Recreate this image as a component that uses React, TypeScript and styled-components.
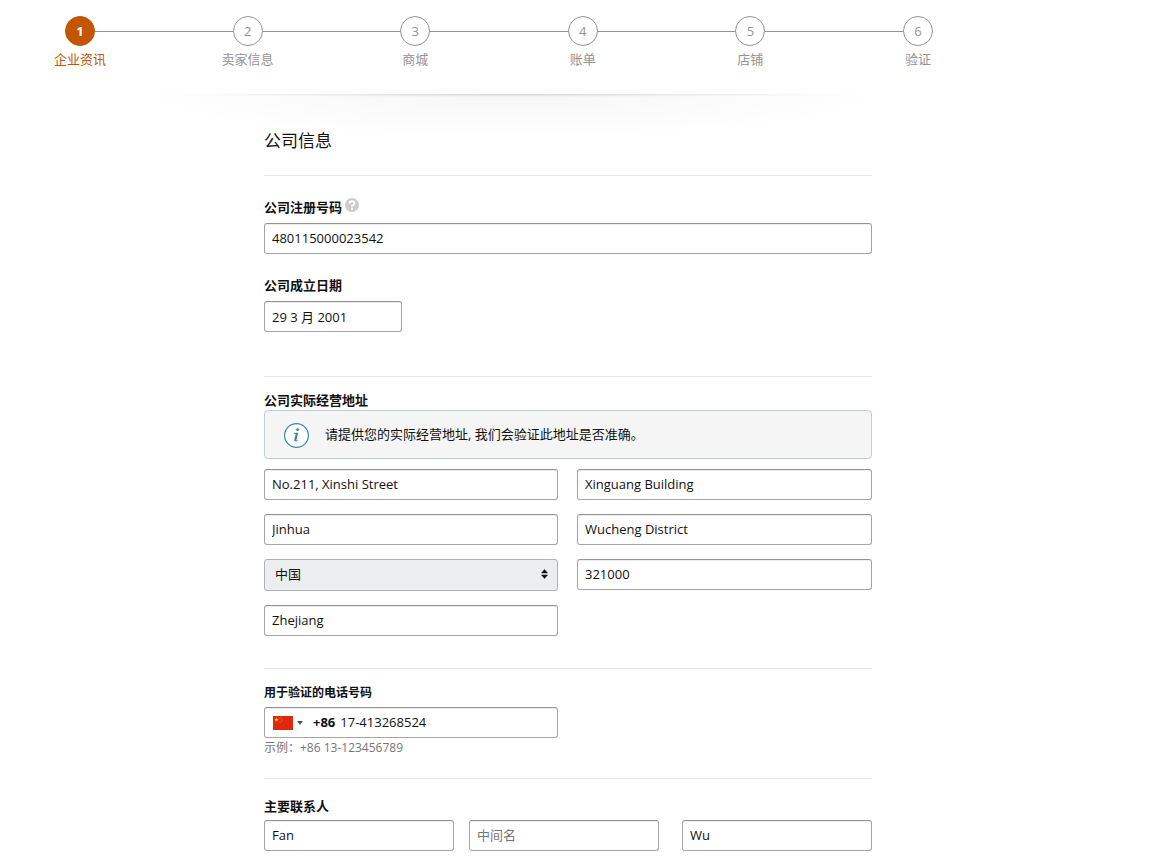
import React from "react";
import styled, { createGlobalStyle, css } from "styled-components";

const GlobalStyle = createGlobalStyle`
  *, *::before, *::after { box-sizing: border-box; }
  body {
    margin: 0;
    background: #fff;
    color: #111;
    font-family: "Open Sans", "Noto Sans CJK SC", sans-serif;
    font-size: 13px;
    line-height: 19px;
  }
  input, select, button { font: inherit; color: inherit; }
`;

const Page = styled.main`
  padding-bottom: 15px;
`;

const Stepper = styled.ol`
  display: flex;
  list-style: none;
  max-width: 933px;
  margin: 0;
  padding: 16px 0 0 65px;
`;

const Step = styled.li<{ $active?: boolean }>`
  display: flex;
  flex: ${(p) => (p.$active ? "none" : "1")};
  color: ${(p) => (p.$active ? "#c45500" : "#949494")};
`;

const Connector = styled.span`
  flex: 1;
  height: 1px;
  margin-top: 15px;
  background: #949494;
`;

const StepBody = styled.div`
  display: flex;
  flex-direction: column;
  align-items: center;
  width: 30px;
  white-space: nowrap;
`;

const StepCircle = styled.span<{ $active?: boolean }>`
  display: flex;
  align-items: center;
  justify-content: center;
  width: 30px;
  height: 30px;
  margin-bottom: 4px;
  border: 1px solid #949494;
  border-radius: 50%;
  ${(p) =>
    p.$active &&
    css`
      border-color: #c45500;
      background: #c45500;
      color: #fff;
      font-weight: 700;
    `}
`;

const Shade = styled.div`
  max-width: 1022px;
  height: 44px;
  margin-top: 25px;
  background:
    radial-gradient(ellipse 360px 3px at 50% 0, rgba(0, 0, 0, 0.13), transparent),
    radial-gradient(ellipse 380px 44px at 50% 0, rgba(0, 0, 0, 0.035), transparent);
`;

const Form = styled.form`
  max-width: 872px;
  margin-top: -9px;
  padding-left: 264px;

  @media (max-width: 800px) {
    padding: 0 16px;
  }
`;

const Title = styled.h1`
  margin: 0;
  padding-bottom: 22px;
  font-size: 17px;
  font-weight: 400;
  line-height: 24px;
`;

const Section = styled.section<{ $top: number; $bottom: number }>`
  padding: ${(p) => p.$top}px 0 ${(p) => p.$bottom}px;
  border-top: 1px solid #e7e7e7;
`;

const Label = styled.label<{ $small?: boolean }>`
  font-size: ${(p) => (p.$small ? 12 : 13)}px;
  font-weight: 700;
`;

const LabelRow = styled.div<{ $gap?: number }>`
  display: flex;
  gap: 3px;
  height: 19px;
  margin-bottom: ${(p) => p.$gap ?? 0}px;
`;

const HelpButton = styled.button`
  display: block;
  width: 14px;
  height: 14px;
  padding: 0;
  border: 0;
  background: none;
  cursor: pointer;
`;

const fieldFrame = css`
  width: 100%;
  height: 31px;
  border: 1px solid #a6a6a6;
  border-top-color: #949494;
  border-radius: 3px;
  background: #fff;
  box-shadow: inset 0 1px 0 rgba(0, 0, 0, 0.07);
`;

const TextInput = styled.input`
  ${fieldFrame}
  display: block;
  padding: 0 7px 2px;
  outline: none;
  &::placeholder { color: #767676; opacity: 1; }
`;

const DateInput = styled(TextInput)`
  width: 138px;
  padding-bottom: 0;
`;

const Field = styled.div`
  & + & { margin-top: 22px; }
`;

const Alert = styled.div`
  display: flex;
  align-items: center;
  gap: 16px;
  height: 49px;
  margin-bottom: 10px;
  padding: 2px 0 0 19px;
  border: 1px solid #b9d0d9;
  border-radius: 4px;
  background: #f5f5f5;
`;

const AlertText = styled.p`
  margin: 0;
  padding-bottom: 3px;
`;

const AddressGrid = styled.div`
  display: grid;
  grid-template-columns: 294fr 295fr;
  gap: 14px 19px;
`;

const SelectBox = styled.div`
  position: relative;
  svg {
    position: absolute;
    right: 10px;
    top: 10px;
    pointer-events: none;
  }
`;

const Select = styled.select`
  display: block;
  width: 100%;
  height: 32px;
  padding: 0 10px 2px;
  appearance: none;
  border: 1px solid #adb1b8;
  border-radius: 3px;
  background: #ecedee;
  outline: none;
`;

const PhoneBox = styled.div`
  ${fieldFrame}
  display: flex;
  align-items: center;
  padding-left: 8px;
`;

const CountryButton = styled.button`
  display: flex;
  align-items: center;
  gap: 4px;
  padding: 0;
  border: 0;
  background: none;
  cursor: pointer;
`;

const DialCode = styled.span`
  margin: 0 5px 0 10px;
  font-weight: 700;
`;

const PhoneInput = styled.input`
  flex: 1;
  min-width: 0;
  padding: 0;
  border: 0;
  background: none;
  outline: none;
`;

const Hint = styled.p`
  margin: 0;
  color: #767676;
  font-size: 12px;
`;

const NameGrid = styled.div`
  display: grid;
  grid-template-columns: 395fr 190fr;
  gap: 23px;
`;

const GivenNames = styled.div`
  display: grid;
  grid-template-columns: 1fr 1fr;
  gap: 15px;
`;

const HelpIcon = () => (
  <svg width="14" height="14" viewBox="0 0 14 14" aria-hidden="true">
    <circle cx="7" cy="7" r="7" fill="#ccc" />
    <path d="M4.5 5.4C4.5 2.5 9.5 2.5 9.5 5.2C9.5 6.9 7 6.8 7 8.6" fill="none" stroke="#fff" strokeWidth="1.9" />
    <rect x="6" y="9.6" width="2" height="2" fill="#fff" />
  </svg>
);

const InfoIcon = () => (
  <svg width="25" height="25" viewBox="0 0 25 25" aria-hidden="true">
    <circle cx="12.5" cy="12.5" r="11.9" fill="#fff" stroke="#3188aa" strokeWidth="1.2" />
    <circle cx="13.6" cy="6.7" r="1.4" fill="#3188aa" />
    <path d="M10 10.5L13.4 10L11.4 17.4Q11.1 18.7 13.8 17.2" fill="none" stroke="#3188aa" strokeWidth="1" />
    <path d="M12.9 10.2L11 18" stroke="#3188aa" strokeWidth="2" />
  </svg>
);

const SortArrows = () => (
  <svg width="7" height="10" viewBox="0 0 7 10" aria-hidden="true">
    <path d="M3.5 0.5L6.5 4H0.5ZM3.5 9.5L6.5 6H0.5Z" fill="#111" stroke="#111" strokeWidth="0.5" strokeLinejoin="round" />
  </svg>
);

const Flag = () => (
  <svg width="20" height="14" viewBox="0 0 20 14" aria-hidden="true">
    <rect width="20" height="14" fill="#de2910" />
    <path d="M3.5 1.5L4 3.1H5.7L4.4 4.1L4.9 5.7L3.5 4.7L2.1 5.7L2.6 4.1L1.3 3.1H3Z" fill="#ffde00" />
    <path d="M6.5 1h1v1h-1zM8 2.5h1v1h-1zM8 4.5h1v1h-1zM6.5 6h1v1h-1z" fill="#f08a08" />
  </svg>
);

const Caret = () => (
  <svg width="6" height="4" viewBox="0 0 6 4" aria-hidden="true">
    <path d="M0 0H6L3 4Z" fill="#555" />
  </svg>
);

const steps = ["企业资讯", "卖家信息", "商城", "账单", "店铺", "验证"];

export default function App() {
  return (
    <Page lang="zh-CN">
      <GlobalStyle />
      <Stepper>
        {steps.map((name, i) => (
          <Step key={name} $active={i === 0} aria-current={i === 0 ? "step" : undefined}>
            {i > 0 && <Connector />}
            <StepBody>
              <StepCircle $active={i === 0}>{i + 1}</StepCircle>
              <span>{name}</span>
            </StepBody>
          </Step>
        ))}
      </Stepper>
      <Shade />
      <Form>
        <Title>公司信息</Title>
        <Section $top={22} $bottom={44}>
          <Field>
            <LabelRow $gap={6}>
              <Label htmlFor="reg">公司注册号码</Label>
              <HelpButton type="button" aria-label="帮助">
                <HelpIcon />
              </HelpButton>
            </LabelRow>
            <TextInput id="reg" defaultValue="480115000023542" />
          </Field>
          <Field>
            <LabelRow $gap={6}>
              <Label htmlFor="founded">公司成立日期</Label>
            </LabelRow>
            <DateInput id="founded" defaultValue="29 3 月 2001" />
          </Field>
        </Section>
        <Section $top={14} $bottom={32}>
          <LabelRow>
            <Label htmlFor="street">公司实际经营地址</Label>
          </LabelRow>
          <Alert>
            <InfoIcon />
            <AlertText>请提供您的实际经营地址, 我们会验证此地址是否准确。</AlertText>
          </Alert>
          <AddressGrid>
            <TextInput id="street" defaultValue="No.211, Xinshi Street" />
            <TextInput aria-label="楼宇" defaultValue="Xinguang Building" />
            <TextInput aria-label="城市" defaultValue="Jinhua" />
            <TextInput aria-label="区" defaultValue="Wucheng District" />
            <SelectBox>
              <Select aria-label="国家" defaultValue="CN">
                <option value="CN">中国</option>
              </Select>
              <SortArrows />
            </SelectBox>
            <TextInput aria-label="邮编" defaultValue="321000" />
            <TextInput aria-label="省份" defaultValue="Zhejiang" />
          </AddressGrid>
        </Section>
        <Section $top={14} $bottom={21}>
          <LabelRow $gap={5}>
            <Label $small htmlFor="phone">用于验证的电话号码</Label>
          </LabelRow>
          <AddressGrid>
            <PhoneBox>
              <CountryButton type="button" aria-label="国家代码">
                <Flag />
                <Caret />
              </CountryButton>
              <DialCode>+86</DialCode>
              <PhoneInput id="phone" type="tel" defaultValue="17-413268524" />
            </PhoneBox>
          </AddressGrid>
          <Hint>示例：+86 13-123456789</Hint>
        </Section>
        <Section $top={18} $bottom={0}>
          <LabelRow $gap={4}>
            <Label htmlFor="first">主要联系人</Label>
          </LabelRow>
          <NameGrid>
            <GivenNames>
              <TextInput id="first" defaultValue="Fan" />
              <TextInput aria-label="中间名" placeholder="中间名" />
            </GivenNames>
            <TextInput aria-label="姓氏" defaultValue="Wu" />
          </NameGrid>
        </Section>
      </Form>
    </Page>
  );
}
